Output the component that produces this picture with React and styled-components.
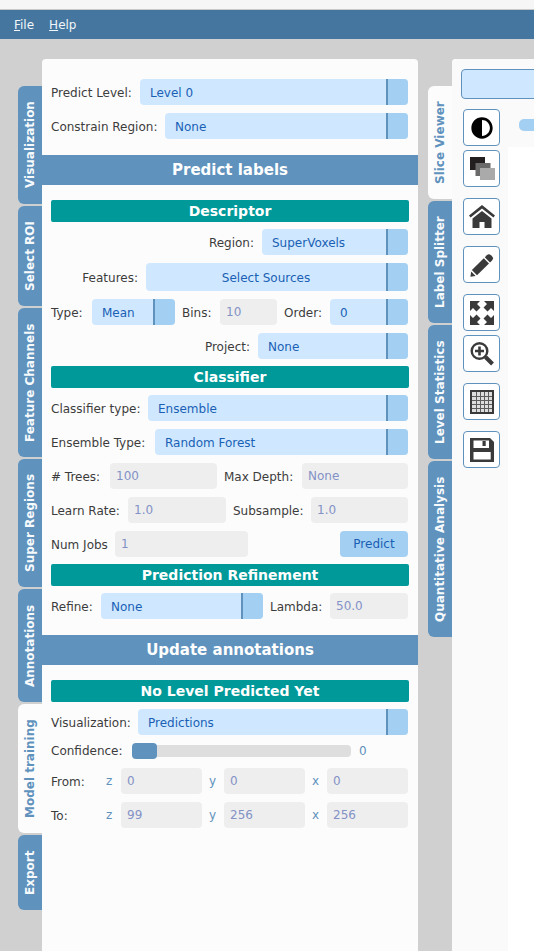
import React from 'react';
import styled, { createGlobalStyle } from 'styled-components';
import { FaAdjust } from 'react-icons/fa';

const Global = createGlobalStyle`
  html, body { margin: 0; padding: 0; height: 100%; overflow: hidden; }
  body { background: #d0d0d0; font-family: "DejaVu Sans", sans-serif; font-size: 12px; color: #3c3c3c; }
  #root { height: 951px; }
`;
const Page = styled.div`display: flex; flex-direction: column; height: 951px; overflow: hidden;`;
const TitleStrip = styled.div`height: 9px; background: #f6f6f6; border-bottom: 1px solid #c8c8c8; flex: none;`;
const MenuBar = styled.div`height: 29px; background: #44769f; flex: none; display: flex; align-items: center; gap: 15px; padding-left: 14px; color: #f2f6fa; font-size: 12px;`;
const Workspace = styled.div`flex: 1; display: flex; padding-top: 20px; min-height: 0;`;
const TabColumn = styled.div`flex: none; width: 24px; margin-left: ${p => p.$ml}px; padding-top: 27px; display: flex; flex-direction: column; gap: 2px;`;
const Tab = styled.div`
  height: ${p => p.$h}px; width: 24px; flex: none; display: flex; align-items: center; justify-content: center;
  writing-mode: vertical-rl; transform: rotate(180deg);
  font-weight: 700; font-size: 12px; white-space: nowrap;
  border-radius: 0 6px 6px 0;
  background: ${p => (p.$active ? '#fcfcfc' : '#5f92bd')};
  color: ${p => (p.$active ? '#5f92bd' : '#f7fafc')};
`;
const Panel = styled.div`flex: none; width: 376px; box-sizing: border-box; background: #fcfcfc; border-radius: 4px 4px 0 0; padding: 20px 9px 0; display: flex; flex-direction: column;`;
const Row = styled.div`display: flex; align-items: center; height: ${p => p.$h || 26}px; line-height: ${p => p.$lh || 29}px; flex: none; padding-right: 1px; margin-top: ${p => p.$mt ?? 8}px; justify-content: ${p => (p.$end ? 'flex-end' : 'flex-start')};`;
const Label = styled.label`
  white-space: nowrap; align-self: stretch; margin-right: ${p => p.$mr ?? 8}px; flex: none;
  * + & { margin-left: ${p => p.$ml ?? 7}px; }
  width: ${p => (p.$w ? `${p.$w}px` : 'auto')};
`;
const SelectBox = styled.div`
  display: flex; height: 100%; box-sizing: border-box; border-radius: 4px; overflow: hidden; background: #cfe8ff; color: #1a5fb4;
  flex: ${p => (p.$w ? 'none' : '1')}; width: ${p => (p.$w ? `${p.$w}px` : 'auto')};
`;
const SelectText = styled.div`flex: 1; line-height: 14px; padding-left: ${p => (p.$center ? 0 : 10)}px; display: flex; align-items: center; justify-content: ${p => (p.$center ? 'center' : 'flex-start')}; padding-top: 1px;`;
const SelectArrow = styled.div`width: 20px; flex: none; background: #a3cff2; border-left: 2px solid #5f92bd;`;
const Input = styled.div`
  height: 26px; box-sizing: border-box; border-radius: 4px; background: #eeeeee; color: #8392c6; padding-left: 6px; line-height: 27px;
  flex: none; width: ${p => p.$w}px;
`;
const Section = styled.div`flex: none; height: 30px; margin: ${p => p.$mt}px -9px 0; background: #5f92bd; color: #fff; font-weight: 700; font-size: 15px; text-align: center; line-height: 30px;`;
const Band = styled.div`flex: none; height: 22px; margin-top: ${p => p.$mt ?? 7}px; background: #009999; color: #fff; font-weight: 700; font-size: 14px; text-align: center; line-height: 22px; border-radius: 2px;`;
const PredictButton = styled.div`margin-left: auto; width: 68px; height: 26px; border-radius: 4px; background: #a3cff2; color: #1a5fb4; text-align: center; line-height: 27px;`;
const SliderTrack = styled.div`flex: none; width: 219px; height: 12px; margin-left: 2px; border-radius: 4px; background: #dedede; display: flex; align-items: center;`;
const SliderThumb = styled.div`width: 25px; height: 16px; border-radius: 4px; background: #5f92bd; flex: none;`;
const SliderValue = styled.div`margin-left: 8px; color: #5f92bd;`;
const Axis = styled.span`flex: none; width: 7px; color: #5f92bd; margin-right: 8px; margin-left: ${p => p.$ml}px;`;
const Viewer = styled.div`flex: 1; min-width: 0; background: #fff; border-radius: 4px 0 0 0; display: flex; flex-direction: column; overflow: hidden;`;
const ViewerHeader = styled.div`flex: none; height: 50px; box-sizing: border-box; background: #fafafa; padding: 10px 0 0 9px;`;
const ViewerBody = styled.div`flex: 1; display: flex; min-height: 0;`;
const ToolColumn = styled.div`flex: none; width: 56px; box-sizing: border-box; background: #fafafa; padding-left: 9px; display: flex; flex-direction: column;`;
const TopBox = styled.div`height: 30px; width: 90px; box-sizing: border-box; border: 1px solid #5f92bd; border-radius: 4px; background: #cfe8ff;`;
const ToolButton = styled.div`
  width: 37px; height: 37px; box-sizing: border-box; margin: ${p => p.$mt}px 0 0 2px; flex: none;
  border: 1px solid #5f92bd; border-radius: 4px; background: #fff; display: flex; align-items: center; justify-content: center; color: #3a3a3a;
`;
const TopRight = styled.div`flex: 1; height: 38px; background: #fafafa; padding: 10px 0 0 11px; box-sizing: border-box;`;
const Pill = styled.div`width: 40px; height: 12px; border-radius: 5px; background: #a3cff2;`;

const Select = ({ w, center, children }) => (
  <SelectBox $w={w}><SelectText $center={center}>{children}</SelectText><SelectArrow /></SelectBox>
);

const Layers = () => (
  <svg width="26" height="26" viewBox="0 0 26 26"><rect x="1" y="1" width="15" height="13" fill="#231f20" /><rect x="6.5" y="7" width="15" height="13" fill="#6a6a6a" /><rect x="11" y="12" width="15" height="12" fill="#aaaaaa" /></svg>
);
const Home = () => (
  <svg width="26" height="24" viewBox="0 0 26 24" fill="#3a3a3a"><path d="M13 0 L26 10.5 L24.4 12.6 L13 3.4 L1.6 12.6 L0 10.5 Z" /><path d="M13 6 L22.5 13.5 V23 H15.5 V17 H10.5 V23 H3.5 V13.5 Z" /></svg>
);
const Pencil = () => (
  <svg width="24" height="24" viewBox="0 0 24 24" fill="#3a3a3a">
    <path d="M16.8 2.2a3 3 0 0 1 4.2 0l1 1a3 3 0 0 1 0 4.2L20 9.4 14.8 4.2Z" />
    <path d="M13.8 5.2 L19 10.4 L7 22.2 L1.9 17.1Z" />
    <path d="M1.2 18.6 L5.6 23 L0.4 23.8Z" />
  </svg>
);
const Expand = () => (
  <svg width="24" height="24" viewBox="0 0 24 24" fill="#3a3a3a">
    <path d="M0 0H10L7 3L10.5 6.5L6.5 10.5L3 7L0 10Z" />
    <path d="M24 0H14L17 3L13.5 6.5L17.5 10.5L21 7L24 10Z" />
    <path d="M0 24H10L7 21L10.5 17.5L6.5 13.5L3 17L0 14Z" />
    <path d="M24 24H14L17 21L13.5 17.5L17.5 13.5L21 17L24 14Z" />
  </svg>
);
const Zoom = () => (
  <svg width="24" height="24" viewBox="0 0 24 24" fill="none" stroke="#3a3a3a">
    <circle cx="9.5" cy="9" r="7.8" strokeWidth="2.4" />
    <path d="M9.5 4.5V13.5M5 9H14" strokeWidth="2.6" />
    <path d="M15.5 15L22.5 22" strokeWidth="4" />
  </svg>
);
const GridIcon = () => (
  <svg width="24" height="24" viewBox="0 0 24 24"><rect width="24" height="24" fill="#3a3a3a" /><rect x="2" y="2" width="20" height="20" fill="#dddddd" /><path d="M6.5 2V22M10.5 2V22M14.5 2V22M18.5 2V22M2 6.5H22M2 10.5H22M2 14.5H22M2 18.5H22" stroke="#5c5c5c" strokeWidth="1" /></svg>
);
const SaveIcon = () => (
  <svg width="24" height="24" viewBox="0 0 24 24" fill="#3a3a3a"><path fillRule="evenodd" d="M0 0H20L24 4V24H0Z M3.5 2.5V10H19V2.5Z M3.5 14V21.5H20.7V14Z" /><rect x="12.5" y="3" width="3.2" height="5" /></svg>
);

export default function App() {
  return (
    <Page>
      <Global />
      <TitleStrip />
      <MenuBar><span><u>F</u>ile</span><span><u>H</u>elp</span></MenuBar>
      <Workspace>
        <TabColumn $ml={18}>
          <Tab $h={118}>Visualization</Tab>
          <Tab $h={100}>Select ROI</Tab>
          <Tab $h={149}>Feature Channels</Tab>
          <Tab $h={128}>Super Regions</Tab>
          <Tab $h={113}>Annotations</Tab>
          <Tab $h={129} $active>Model training</Tab>
          <Tab $h={75}>Export</Tab>
        </TabColumn>
        <Panel>
          <Row $mt={0}><Label $w={81}>Predict Level:</Label><Select>Level 0</Select></Row>
          <Row><Label $w={106}>Constrain Region:</Label><Select>None</Select></Row>
          <Section $mt={16}>Predict labels</Section>
          <Band $mt={15}>Descriptor</Band>
          <Row $mt={7} $end><Label>Region:</Label><Select w={146}>SuperVoxels</Select></Row>
          <Row $end $h={28} $lh={31}><Label>Features:</Label><Select w={262} center>Select Sources</Select></Row>
          <Row>
            <Label $w={33}>Type:</Label><Select w={83}>Mean</Select>
            <Label $w={30}>Bins:</Label><Input $w={57}>10</Input>
            <Label $w={38}>Order:</Label><Select w={78}>0</Select>
          </Row>
          <Row $end><Label>Project:</Label><Select w={150}>None</Select></Row>
          <Band>Classifier</Band>
          <Row $mt={7}><Label $w={89}>Classifier type:</Label><Select>Ensemble</Select></Row>
          <Row><Label $w={96}>Ensemble Type:</Label><Select>Random Forest</Select></Row>
          <Row>
            <Label $w={51}># Trees:</Label><Input $w={107}>100</Input>
            <Label $w={70}>Max Depth:</Label><Input $w={106}>None</Input>
          </Row>
          <Row>
            <Label $w={69}>Learn Rate:</Label><Input $w={98}>1.0</Input>
            <Label $w={70}>Subsample:</Label><Input $w={97}>1.0</Input>
          </Row>
          <Row>
            <Label $w={56}>Num Jobs</Label><Input $w={133}>1</Input>
            <PredictButton>Predict</PredictButton>
          </Row>
          <Band>Prediction Refinement</Band>
          <Row $mt={7}>
            <Label $w={42}>Refine:</Label><Select w={162}>None</Select>
            <Label $w={52}>Lambda:</Label><Input $w={78}>50.0</Input>
          </Row>
          <Section $mt={16}>Update annotations</Section>
          <Band $mt={15}>No Level Predicted Yet</Band>
          <Row $mt={7}><Label $w={79}>Visualization:</Label><Select>Predictions</Select></Row>
          <Row $h={16} $lh={16}>
            <Label $w={71}>Confidence:</Label>
            <SliderTrack><SliderThumb /></SliderTrack>
            <SliderValue>0</SliderValue>
          </Row>
          <Row $mt={9}>
            <Label $w={48} $mr={0}>From:</Label>
            <Axis $ml={7}>z</Axis><Input $w={81}>0</Input>
            <Axis $ml={7}>y</Axis><Input $w={81}>0</Input>
            <Axis $ml={7}>x</Axis><Input $w={81}>0</Input>
          </Row>
          <Row>
            <Label $w={48} $mr={0}>To:</Label>
            <Axis $ml={7}>z</Axis><Input $w={81}>99</Input>
            <Axis $ml={7}>y</Axis><Input $w={81}>256</Input>
            <Axis $ml={7}>x</Axis><Input $w={81}>256</Input>
          </Row>
        </Panel>
        <TabColumn $ml={10}>
          <Tab $h={113} $active>Slice Viewer</Tab>
          <Tab $h={122}>Label Splitter</Tab>
          <Tab $h={134}>Level Statistics</Tab>
          <Tab $h={176}>Quantitative Analysis</Tab>
        </TabColumn>
        <Viewer>
          <ViewerHeader><TopBox /></ViewerHeader>
          <ViewerBody>
            <ToolColumn>
              <ToolButton $mt={0}><FaAdjust size={22} color="#000" /></ToolButton>
              <ToolButton $mt={4}><Layers /></ToolButton>
              <ToolButton $mt={11}><Home /></ToolButton>
              <ToolButton $mt={11}><Pencil /></ToolButton>
              <ToolButton $mt={11}><Expand /></ToolButton>
              <ToolButton $mt={4}><Zoom /></ToolButton>
              <ToolButton $mt={11}><GridIcon /></ToolButton>
              <ToolButton $mt={11}><SaveIcon /></ToolButton>
            </ToolColumn>
            <TopRight><Pill /></TopRight>
          </ViewerBody>
        </Viewer>
      </Workspace>
    </Page>
  );
}
